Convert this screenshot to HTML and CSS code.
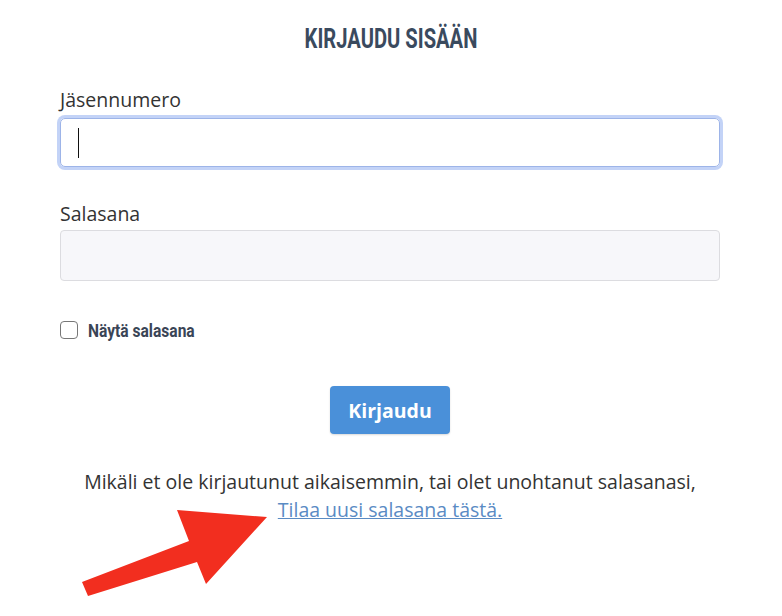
FILE: index.html
```html
<!DOCTYPE html>
<html lang="fi">
<head>
<meta charset="utf-8">
<link rel="stylesheet" href="styles.css">
</head>
<body>
<div class="page">
  <div class="title-row"><h1 class="title">KIRJAUDU SISÄÄN</h1></div>
  <form class="form">
    <label class="label" for="num">Jäsennumero</label>
    <div class="input input-focus"><span class="caret"></span></div>
    <label class="label label-2" for="pw">Salasana</label>
    <div class="input input-fill"></div>
    <div class="check-row">
      <span class="checkbox"></span>
      <span class="check-label">Näytä salasana</span>
    </div>
    <div class="btn-row"><button type="button" class="btn">Kirjaudu</button></div>
    <p class="note">Mikäli et ole kirjautunut aikaisemmin, tai olet unohtanut salasanasi,<br><a class="link" href="#">Tilaa uusi salasana tästä.</a></p>
  </form>
  <svg class="arrow" width="782" height="616" viewBox="0 0 782 616">
    <polygon points="82,582 189,541 177,510 267,517 206,584 197,562 88,596" fill="#f22e1f"/>
  </svg>
</div>
</body>
</html>
```
FILE: styles.css
```css
* { box-sizing: border-box; }
html, body { margin: 0; padding: 0; background: #fff; }
body { font-family: "Open Sans", "Liberation Sans", sans-serif; color: #333; }
.page { position: relative; width: 782px; height: 616px; overflow: hidden; padding-top: 20px; }
.title-row { display: flex; justify-content: center; height: 38px; }
.title {
  margin: 0;
  display: inline-block;
  font-family: Roboto, "Liberation Sans", sans-serif;
  font-weight: bold;
  font-size: 28px;
  line-height: 38px;
  color: #3a4a5e;
  transform: scaleX(0.72);
  white-space: nowrap;
}
.form { width: 660px; margin: 0 0 0 60px; padding-top: 29px; }
.label { display: block; font-size: 19.5px; line-height: 26px; color: #333; }
.label-2 { margin-top: 34px; }
.input { height: 51px; border: 1px solid #d6d6dc; border-radius: 5px; margin-top: 3px; }
.input-focus {
  position: relative;
  height: 49px;
  border-color: #9db4e8;
  box-shadow: 0 0 0 3px #c3d3f7;
  margin-top: 5px;
}
.caret { position: absolute; left: 17px; top: 9px; width: 1px; height: 30px; background: #111; }
.input-fill { background: #f7f7fa; border-color: #dcdce0; border-radius: 4px; }
.check-row { display: flex; align-items: center; margin-top: 40px; height: 18px; }
.checkbox { width: 18px; height: 18px; border: 1.5px solid #777; border-radius: 4px; background: #fff; flex: none; }
.check-label {
  display: inline-block;
  margin-left: 10px;
  font-family: Roboto, "Liberation Sans", sans-serif;
  font-weight: bold;
  font-size: 18px;
  color: #3a4556;
  transform: scaleX(0.865);
  transform-origin: left center;
  white-space: nowrap;
}
.btn-row { display: flex; justify-content: center; margin-top: 47px; }
.btn {
  width: 120px; height: 48px;
  background: #4a90d9;
  border: none; border-radius: 4px;
  color: #fff;
  font-family: "Open Sans", sans-serif;
  font-weight: bold; font-size: 19.5px;
  box-shadow: 0 1px 2px rgba(0,0,0,0.15);
}
.note { margin: 34px 0 0; text-align: center; font-size: 19.5px; line-height: 28px; color: #333; }
.link { color: #5a8bc4; text-decoration: underline; }
.arrow { position: absolute; left: 0; top: 0; pointer-events: none; }
```
